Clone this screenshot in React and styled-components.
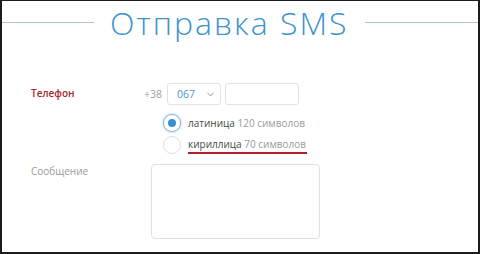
import React from 'react';
import styled, { createGlobalStyle } from 'styled-components';

const Global = createGlobalStyle`
  html, body {
    margin: 0;
    padding: 0;
    background: #ffffff;
  }
  body {
    font-family: "Open Sans", "DejaVu Sans", sans-serif;
  }
`;

const Frame = styled.div`
  box-sizing: border-box;
  width: 480px;
  height: 254px;
  border: 2px solid #1c1c1c;
  border-top-width: 1px;
  background: #fff;
  overflow: hidden;
  display: flex;
  flex-direction: column;
`;

const TitleRow = styled.div`
  display: flex;
  align-items: center;
  gap: 16px;
  height: 42px;
`;

const Rule = styled.div`
  height: 1px;
  background: #a9c9da;
  flex: ${props => (props.$grow ? '1' : `0 0 ${props.$width}px`)};
`;

const Title = styled.h1`
  margin: 0;
  font-family: "Open Sans", sans-serif;
  font-weight: 300;
  font-size: 32px;
  line-height: 44px;
  color: #3d92cf;
  letter-spacing: 2px;
  padding-top: 2px;
`;

const Form = styled.div`
  display: grid;
  grid-template-columns: 113px 1fr;
  padding: 40px 0 0 29px;
`;

const Label = styled.div`
  font-size: 10px;
  line-height: 14px;
  color: ${props => (props.$required ? '#a3262c' : '#9a9a9a')};
  font-weight: ${props => (props.$required ? 600 : 400)};
  padding-top: ${props => props.$top}px;
`;

const PhoneRow = styled.div`
  display: flex;
  align-items: center;
  gap: 4px;
  height: 22px;
`;

const Prefix = styled.span`
  font-size: 10.5px;
  color: #a0a0a0;
  margin-right: 1px;
`;

const Select = styled.div`
  box-sizing: border-box;
  width: 54px;
  height: 22px;
  border: 1px solid #e2e2e2;
  border-radius: 3px;
  display: flex;
  align-items: center;
  justify-content: space-between;
  padding: 0 6px 0 9px;
  font-size: 10.5px;
  color: #4a98d0;
`;

const Chevron = styled.svg`
  width: 7px;
  height: 5px;
`;

const Input = styled.div`
  box-sizing: border-box;
  width: 74px;
  height: 22px;
  border: 1px solid #e2e2e2;
  border-radius: 3px;
`;

const Options = styled.div`
  display: flex;
  flex-direction: column;
  gap: 4px;
  margin: 9px 0 0 19px;
`;

const Option = styled.label`
  display: flex;
  align-items: center;
  gap: 7px;
  height: 18px;
  font-size: 10px;
  color: #484848;
`;

const Radio = styled.span`
  box-sizing: border-box;
  width: 18px;
  height: 18px;
  border-radius: 50%;
  border: 1px solid ${props => (props.$checked ? '#8fb6d6' : '#e0e0e0')};
  box-shadow: ${props => (props.$checked ? '0 0 3px rgba(74,152,208,0.6)' : 'none')};
  display: flex;
  align-items: center;
  justify-content: center;
  &::after {
    content: '';
    width: 8px;
    height: 8px;
    border-radius: 50%;
    background: #3a8fd0;
    display: ${props => (props.$checked ? 'block' : 'none')};
  }
`;

const Muted = styled.span`
  color: #9a9a9a;
`;

const Marked = styled.span`
  border-bottom: 2px solid #b01f2c;
  padding-bottom: 1px;
  padding-right: 1px;
`;

const Textarea = styled.div`
  box-sizing: border-box;
  width: 169px;
  height: 75px;
  margin: 10px 0 0 7px;
  border: 1px solid #e0e0e0;
  border-radius: 4px;
`;

export default function App() {
  return (
    <>
      <Global />
      <Frame>
        <TitleRow>
          <Rule $width={92} />
          <Title>Отправка SMS</Title>
          <Rule $grow />
        </TitleRow>
        <Form>
          <Label $required $top={3}>Телефон</Label>
          <div>
            <PhoneRow>
              <Prefix>+38</Prefix>
              <Select>
                067
                <Chevron viewBox="0 0 7 5">
                  <path d="M0.5 0.8 L3.5 4 L6.5 0.8" fill="none" stroke="#9a9a9a" strokeWidth="1" />
                </Chevron>
              </Select>
              <Input />
            </PhoneRow>
            <Options>
              <Option>
                <Radio $checked />
                <span>латиница <Muted>120 символов</Muted></span>
              </Option>
              <Option>
                <Radio />
                <Marked>кириллица <Muted>70 символов</Muted></Marked>
              </Option>
            </Options>
          </div>
          <Label $top={10}>Сообщение</Label>
          <Textarea />
        </Form>
      </Frame>
    </>
  );
}
